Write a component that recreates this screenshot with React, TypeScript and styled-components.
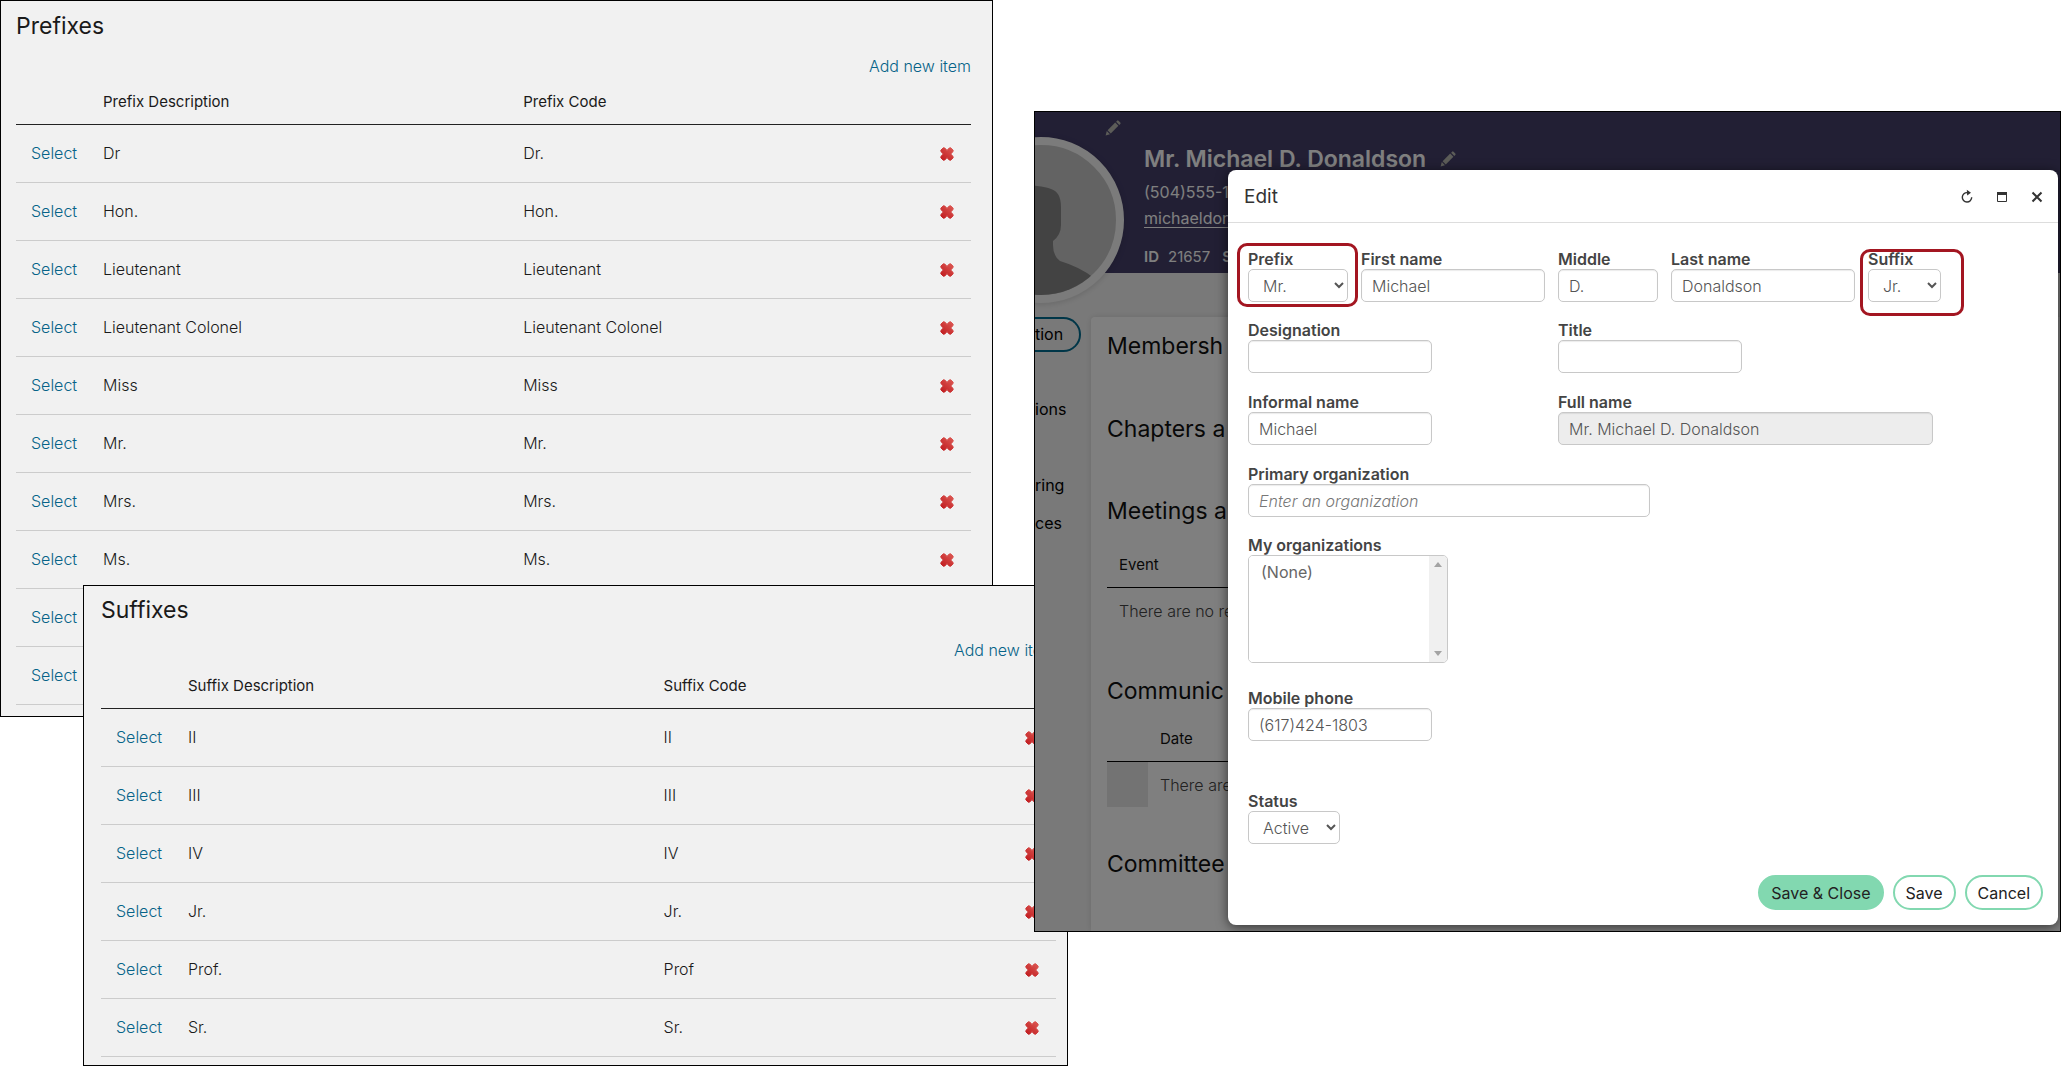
import React from "react";
import styled, { createGlobalStyle, css } from "styled-components";

const GlobalStyle = createGlobalStyle`
  *, *::before, *::after { box-sizing: border-box; }
  body {
    margin: 0;
    background: #fff;
    color: #1a1a1a;
    font-family: Inter, "Open Sans", sans-serif;
    font-size: 16px;
    font-weight: 300;
    line-height: 24px;
  }
  h1, h2, h3, p, ul { margin: 0; padding: 0; }
`;

/* ---------- canvas ---------- */

const Canvas = styled.main`
  display: grid;
  grid-template-columns: 83fr 910fr 41fr 34fr 993fr 2fr;
  align-items: start;
  min-height: 100vh;
  overflow: hidden;
`;

const Panel = styled.section<{ $columns: string; $top: number }>`
  grid-row: 1;
  grid-column: ${(p) => p.$columns};
  margin-top: ${(p) => p.$top}px;
  min-width: 0;
  border: 1px solid #000;
`;

/* ---------- lookup lists ---------- */

const ListPanel = styled(Panel)<{ $pad: string }>`
  padding: ${(p) => p.$pad};
  background: #f1f1f1;
`;

const ListTitle = styled.h2`
  font-size: 23px;
  line-height: 30px;
  font-weight: 400;
`;

const ListToolbar = styled.div`
  display: flex;
  justify-content: flex-end;
  padding-top: 13px;
`;

const TextLink = styled.a`
  color: #066388;
  text-decoration: none;
`;

const ListTable = styled.table`
  width: 100%;
  table-layout: fixed;
  border-collapse: separate;
  border-spacing: 0;
`;

const Column = styled.col<{ $width?: string }>`
  width: ${(p) => p.$width ?? "auto"};
`;

const HeadCell = styled.th`
  height: 47px;
  padding: 2px 0 0;
  border-bottom: 1px solid #222;
  font-size: 15px;
  font-weight: 400;
  text-align: left;
`;

const Cell = styled.td<{ $kind?: "select" | "action" }>`
  height: 58px;
  padding: 0 0 2px;
  border-bottom: 1px solid #ccc;
  ${(p) => p.$kind === "select" && css`padding-left: 15px;`}
  ${(p) => p.$kind === "action" && css`padding-right: 17px; text-align: right;`}
`;

const PlainButton = styled.button`
  display: inline-flex;
  padding: 0;
  border: 0;
  background: none;
  color: inherit;
  cursor: pointer;
  vertical-align: middle;
`;

const DeleteIcon = () => (
  <svg width="14" height="14" viewBox="0 0 14 14" aria-hidden="true">
    <defs>
      <linearGradient id="del" x1="1" y1="0" x2="0.2" y2="1">
        <stop offset="0" stopColor="#dd5a55" />
        <stop offset="1" stopColor="#c21f22" />
      </linearGradient>
    </defs>
    <path
      d="M3.4 .7 4.9 1.1 7 3.4 9.1 1.1 10.6 .7 13.2 3.2 12.9 4.7 10.7 7 12.9 9.3 13.2 10.8 10.6 13.3 9.1 12.9 7 10.6 4.9 12.9 3.4 13.3 .8 10.8 1.1 9.3 3.3 7 1.1 4.7 .8 3.2Z"
      fill="url(#del)"
      stroke="url(#del)"
      strokeWidth="1"
      strokeLinejoin="round"
    />
  </svg>
);

type ListProps = {
  title: string;
  noun: string;
  columns: string;
  top: number;
  pad: string;
  descriptionWidth: string;
  rows: [string, string][];
};

const LookupList = ({ title, noun, columns, top, pad, descriptionWidth, rows }: ListProps) => (
  <ListPanel $columns={columns} $top={top} $pad={pad}>
    <ListTitle>{title}</ListTitle>
    <ListToolbar>
      <TextLink href="#add">Add new item</TextLink>
    </ListToolbar>
    <ListTable>
      <colgroup>
        <Column $width="87px" />
        <Column $width={descriptionWidth} />
        <Column />
        <Column $width="60px" />
      </colgroup>
      <thead>
        <tr>
          <HeadCell />
          <HeadCell>{noun} Description</HeadCell>
          <HeadCell>{noun} Code</HeadCell>
          <HeadCell />
        </tr>
      </thead>
      <tbody>
        {rows.map(([description, code], i) => (
          <tr key={i}>
            <Cell $kind="select">
              <TextLink href="#select">Select</TextLink>
            </Cell>
            <Cell>{description}</Cell>
            <Cell>{code}</Cell>
            <Cell $kind="action">
              <PlainButton type="button" aria-label="Delete">
                <DeleteIcon />
              </PlainButton>
            </Cell>
          </tr>
        ))}
      </tbody>
    </ListTable>
  </ListPanel>
);

const PREFIXES: [string, string][] = [
  ["Dr", "Dr."],
  ["Hon.", "Hon."],
  ["Lieutenant", "Lieutenant"],
  ["Lieutenant Colonel", "Lieutenant Colonel"],
  ["Miss", "Miss"],
  ["Mr.", "Mr."],
  ["Mrs.", "Mrs."],
  ["Ms.", "Ms."],
  ["", ""],
  ["", ""],
];

const SUFFIXES: [string, string][] = [
  ["II", "II"],
  ["III", "III"],
  ["IV", "IV"],
  ["Jr.", "Jr."],
  ["Prof.", "Prof"],
  ["Sr.", "Sr."],
];

/* ---------- profile page behind the dialog ---------- */

const ProfilePanel = styled(Panel)`
  display: grid;
  overflow: hidden;
`;

const Page = styled.div`
  grid-area: 1 / 1;
  display: flex;
  flex-direction: column;
  min-width: 0;
  background: #f3f3f3;
  color: #111;
`;

const Banner = styled.header`
  display: flex;
  align-items: flex-start;
  height: 161px;
  background: #443e69;
  color: #fff;
`;

const Avatar = styled.div`
  flex: none;
  width: 166px;
  height: 166px;
  margin: 25px 0 0 -77px;
  border: 8px solid #f6f6f6;
  border-radius: 50%;
  overflow: hidden;
  background: #c6c6c6;
  box-shadow: 0 1px 6px rgba(0, 0, 0, 0.15);
  z-index: 1;
`;

const AvatarEdit = styled.div`
  display: flex;
  width: 20px;
  margin: 8px 0 0 -19px;
`;

const BannerText = styled.div`
  display: flex;
  flex-direction: column;
  padding: 32px 0 0 19px;
  white-space: nowrap;
`;

const NameRow = styled.div`
  display: flex;
  align-items: center;
  gap: 14px;
`;

const Name = styled.h1`
  font-size: 23px;
  line-height: 30px;
  font-weight: 600;
`;

const Phone = styled.p`
  padding-top: 5px;
  line-height: 26px;
  font-weight: 400;
`;

const Email = styled.a`
  color: inherit;
  line-height: 26px;
  font-weight: 400;
  text-underline-offset: 3px;
`;

const Facts = styled.p`
  display: flex;
  gap: 12px;
  padding-top: 14px;
  font-size: 15px;
  font-weight: 400;
  span { display: flex; gap: 9px; }
  b { font-weight: 600; }
`;

const PageBody = styled.div`
  flex: 1;
  display: flex;
  align-items: stretch;
  padding-top: 44px;
`;

const SideNav = styled.nav`
  flex: none;
  width: 56px;
`;

const NavLink = styled.a<{ $active?: boolean; $skip?: boolean }>`
  display: block;
  margin-top: ${(p) => (p.$skip ? 38 : 0)}px;
  color: #000;
  font-weight: 400;
  line-height: 38px;
  text-decoration: none;
  ${(p) =>
    p.$active &&
    css`
      width: 46px;
      margin-bottom: 6px;
      border: 2px solid #006c90;
      border-left: 0;
      border-radius: 0 18px 18px 0;
      line-height: 31px;
    `}
`;

const Card = styled.div`
  flex: 1;
  min-width: 0;
  padding: 14px 16px 0;
  background: #fff;
  box-shadow: 0 0 6px rgba(0, 0, 0, 0.12);
  border-radius: 4px 0 0 0;
`;

const Block = styled.section<{ $height: number }>`
  min-height: ${(p) => p.$height}px;
  white-space: nowrap;
`;

const BlockTitle = styled.h3`
  font-size: 23px;
  line-height: 30px;
  font-weight: 400;
`;

const RecordTable = styled.table<{ $gap: number }>`
  width: 100%;
  margin-top: ${(p) => p.$gap}px;
  border-spacing: 0;
  th {
    height: 46px;
    padding: 0 0 0 12px;
    border-bottom: 1px solid #000;
    font-size: 15px;
    font-weight: 400;
    text-align: left;
  }
  td {
    height: 45px;
    padding: 0 0 0 12px;
    color: #444;
  }
`;

const HandleHead = styled.th`
  width: 41px;
`;

const HandleCell = styled.td`
  background: #e6e6e6;
`;

const Shade = styled.div`
  grid-area: 1 / 1;
  display: flex;
  min-width: 0;
  padding: 58px 2px 6px 193px;
  background: rgba(0, 0, 0, 0.5);
  z-index: 2;
`;

const PencilIcon = () => (
  <svg width="16" height="16" viewBox="0 0 16 16" aria-hidden="true" fill="#b8b8b0">
    <path d="M.6 15.4 1.8 11 5 14.2Z" />
    <path d="M2.6 10.2 10.2 2.6 13.4 5.8 5.8 13.4Z" />
    <path d="M11.1 1.7 12.1.7Q12.8 0 13.5.7L15.3 2.5Q16 3.2 15.3 3.9L14.3 4.9Z" />
  </svg>
);

/* ---------- edit dialog ---------- */

const Dialog = styled.div`
  flex: 1;
  min-width: 0;
  border-radius: 8px;
  background: #fff;
  box-shadow: 0 2px 12px rgba(0, 0, 0, 0.6);
  color: #444;
`;

const DialogHeader = styled.header`
  display: flex;
  align-items: center;
  justify-content: space-between;
  height: 53px;
  padding: 2px 13px 0 16px;
  border-bottom: 1px solid #ddd;
`;

const DialogTitle = styled.h2`
  color: #333;
  font-size: 19px;
  font-weight: 400;
`;

const WindowButtons = styled.div`
  display: flex;
  gap: 19px;
  color: #333;
`;

const Form = styled.form`
  padding: 24px 15px 15px 20px;
`;

const FormRow = styled.div<{ $gap?: number }>`
  display: flex;
  gap: 13px;
  margin-top: ${(p) => p.$gap ?? 0}px;
`;

const FieldBox = styled.div<{ $width: number }>`
  position: relative;
  display: flex;
  flex-direction: column;
  width: ${(p) => p.$width}px;
`;

const Label = styled.label`
  padding-top: 2px;
  font-weight: 600;
  line-height: 20px;
  white-space: nowrap;
`;

const control = css`
  width: 100%;
  height: 33px;
  border: 1px solid #c8c8c8;
  border-radius: 5px;
  background: #fff;
  color: #555;
  font: inherit;
`;

const TextBox = styled.input`
  ${control}
  padding: 0 10px;
  box-shadow: inset 0 1px 1px rgba(0, 0, 0, 0.08);
  &:disabled { background: #ededed; }
  &::placeholder { color: #777; font-style: italic; opacity: 1; }
`;

const DropDown = styled.select`
  ${control}
  padding: 0 0 0 10px;
`;

const ListFrame = styled.div`
  display: flex;
  height: 108px;
  border: 1px solid #c8c8c8;
  border-radius: 5px;
  overflow: hidden;
`;

const ListBox = styled.select`
  flex: 1;
  min-width: 0;
  padding: 6px 10px;
  border: 0;
  background: #fff;
  color: #666;
  font: inherit;
  scrollbar-width: none;
`;

const ScrollTrack = styled.div`
  display: flex;
  flex-direction: column;
  justify-content: space-between;
  align-items: center;
  width: 18px;
  padding: 6px 0;
  background: #f0f0f0;
`;

const Highlight = styled.div<{ $at: string; $width: number; $height: number }>`
  position: absolute;
  inset: ${(p) => p.$at};
  width: ${(p) => p.$width}px;
  height: ${(p) => p.$height}px;
  border: 3px solid #a31621;
  border-radius: 10px;
  pointer-events: none;
`;

const Actions = styled.div`
  display: flex;
  justify-content: flex-end;
  gap: 9px;
  padding-top: 31px;
`;

const PillButton = styled.button<{ $primary?: boolean }>`
  height: 35px;
  padding: 0 11px;
  border: 2px solid #82d8b0;
  border-radius: 18px;
  background: ${(p) => (p.$primary ? "#82d8b0" : "#fff")};
  color: #222;
  font: inherit;
  font-weight: 400;
  cursor: pointer;
`;

type FieldProps = {
  id: string;
  label: string;
  width: number;
  children: React.ReactNode;
};

const Field = ({ id, label, width, children }: FieldProps) => (
  <FieldBox $width={width}>
    <Label htmlFor={id}>{label}</Label>
    {children}
  </FieldBox>
);

const EditDialog = () => (
  <Dialog role="dialog" aria-label="Edit">
    <DialogHeader>
      <DialogTitle>Edit</DialogTitle>
      <WindowButtons>
        <PlainButton type="button" aria-label="Reload">
          <svg width="16" height="16" viewBox="0 0 16 16" fill="none" stroke="currentColor" strokeWidth="1.4">
            <path d="M8.4 3.6A4.7 4.7 0 1 0 12.7 8.3" />
            <path d="M7.8.8 12 3.7 8.2 6.6Z" fill="currentColor" stroke="none" />
          </svg>
        </PlainButton>
        <PlainButton type="button" aria-label="Maximize">
          <svg width="16" height="16" viewBox="0 0 16 16" fill="none" stroke="currentColor">
            <path d="M3.5 3.5h9v9h-9z" />
            <path d="M3 4.5h10" strokeWidth="3" />
          </svg>
        </PlainButton>
        <PlainButton type="button" aria-label="Close">
          <svg width="16" height="16" viewBox="0 0 16 16" stroke="currentColor" strokeWidth="2">
            <path d="M3.5 3.5 12.5 12.5M12.5 3.5 3.5 12.5" />
          </svg>
        </PlainButton>
      </WindowButtons>
    </DialogHeader>
    <Form onSubmit={(e) => e.preventDefault()}>
      <FormRow>
        <Field id="prefix" label="Prefix" width={100}>
          <DropDown id="prefix">
            <option>Mr.</option>
          </DropDown>
          <Highlight $at="-4px auto auto -11px" $width={121} $height={64} />
        </Field>
        <Field id="first" label="First name" width={184}>
          <TextBox id="first" defaultValue="Michael" />
        </Field>
        <Field id="middle" label="Middle" width={100}>
          <TextBox id="middle" defaultValue="D." />
        </Field>
        <Field id="last" label="Last name" width={184}>
          <TextBox id="last" defaultValue="Donaldson" />
        </Field>
        <Field id="suffix" label="Suffix" width={73}>
          <DropDown id="suffix">
            <option>Jr.</option>
          </DropDown>
          <Highlight $at="2px auto auto -8px" $width={104} $height={67} />
        </Field>
      </FormRow>
      <FormRow $gap={16}>
        <Field id="designation" label="Designation" width={297}>
          <FieldBox $width={184}>
            <TextBox id="designation" />
          </FieldBox>
        </Field>
        <Field id="title" label="Title" width={184}>
          <TextBox id="title" />
        </Field>
      </FormRow>
      <FormRow $gap={17}>
        <Field id="informal" label="Informal name" width={297}>
          <FieldBox $width={184}>
            <TextBox id="informal" defaultValue="Michael" />
          </FieldBox>
        </Field>
        <Field id="full" label="Full name" width={375}>
          <TextBox id="full" defaultValue="Mr. Michael D. Donaldson" disabled />
        </Field>
      </FormRow>
      <FormRow $gap={17}>
        <Field id="organization" label="Primary organization" width={402}>
          <TextBox id="organization" placeholder="Enter an organization" />
        </Field>
      </FormRow>
      <FormRow $gap={16}>
        <Field id="organizations" label="My organizations" width={200}>
          <ListFrame>
            <ListBox id="organizations" size={4}>
              <option>(None)</option>
            </ListBox>
            <ScrollTrack>
              <svg width="8" height="5" viewBox="0 0 8 5" fill="#a3a3a3" aria-hidden="true">
                <path d="M0 5 4 0 8 5Z" />
              </svg>
              <svg width="8" height="5" viewBox="0 0 8 5" fill="#a3a3a3" aria-hidden="true">
                <path d="M0 0 4 5 8 0Z" />
              </svg>
            </ScrollTrack>
          </ListFrame>
        </Field>
      </FormRow>
      <FormRow $gap={23}>
        <Field id="mobile" label="Mobile phone" width={184}>
          <TextBox id="mobile" defaultValue="(617)424-1803" />
        </Field>
      </FormRow>
      <FormRow $gap={48}>
        <Field id="status" label="Status" width={92}>
          <DropDown id="status">
            <option>Active</option>
          </DropDown>
        </Field>
      </FormRow>
      <Actions>
        <PillButton type="submit" $primary>
          Save &amp; Close
        </PillButton>
        <PillButton type="button">Save</PillButton>
        <PillButton type="button">Cancel</PillButton>
      </Actions>
    </Form>
  </Dialog>
);

const Profile = () => (
  <ProfilePanel $columns="4 / 6" $top={111}>
    <Page>
      <Banner>
        <Avatar>
          <svg width="150" height="150" viewBox="0 0 150 150" fill="#868686" aria-hidden="true">
            <path d="M55 46Q61 40 71 41Q80 42 85 44Q95 47 95 62V80Q95 90 87 96V100Q87 111 94 116Q114 122 128 133L128 150H22L22 133Q36 122 56 116Q63 111 63 100V96Q55 90 55 80Z" />
          </svg>
        </Avatar>
        <AvatarEdit>
          <PencilIcon />
        </AvatarEdit>
        <BannerText>
          <NameRow>
            <Name>Mr. Michael D. Donaldson</Name>
            <PencilIcon />
          </NameRow>
          <Phone>(504)555-1</Phone>
          <Email href="#email">michaeldon</Email>
          <Facts>
            <span>
              <b>ID</b> 21657
            </span>
            <b>S</b>
          </Facts>
        </BannerText>
      </Banner>
      <PageBody>
        <SideNav>
          <NavLink href="#1" $active>
            tion
          </NavLink>
          <NavLink href="#2" $skip>
            ions
          </NavLink>
          <NavLink href="#3" $skip>
            ring
          </NavLink>
          <NavLink href="#4">ces</NavLink>
        </SideNav>
        <Card>
          <Block $height={83}>
            <BlockTitle>Membersh</BlockTitle>
          </Block>
          <Block $height={82}>
            <BlockTitle>Chapters a</BlockTitle>
          </Block>
          <Block $height={180}>
            <BlockTitle>Meetings a</BlockTitle>
            <RecordTable $gap={16}>
              <thead>
                <tr>
                  <th>Event</th>
                </tr>
              </thead>
              <tbody>
                <tr>
                  <td>There are no re</td>
                </tr>
              </tbody>
            </RecordTable>
          </Block>
          <Block $height={173}>
            <BlockTitle>Communic</BlockTitle>
            <RecordTable $gap={10}>
              <thead>
                <tr>
                  <HandleHead />
                  <th>Date</th>
                </tr>
              </thead>
              <tbody>
                <tr>
                  <HandleCell />
                  <td>There are</td>
                </tr>
              </tbody>
            </RecordTable>
          </Block>
          <BlockTitle>Committee</BlockTitle>
        </Card>
      </PageBody>
    </Page>
    <Shade>
      <EditDialog />
    </Shade>
  </ProfilePanel>
);

export default function App() {
  return (
    <>
      <GlobalStyle />
      <Canvas>
        <LookupList
          title="Prefixes"
          noun="Prefix"
          columns="1 / 3"
          top={0}
          pad="10px 21px 11px 15px"
          descriptionWidth="44%"
          rows={PREFIXES}
        />
        <LookupList
          title="Suffixes"
          noun="Suffix"
          columns="2 / 5"
          top={585}
          pad="9px 11px 8px 17px"
          descriptionWidth="49.8%"
          rows={SUFFIXES}
        />
        <Profile />
      </Canvas>
    </>
  );
}
